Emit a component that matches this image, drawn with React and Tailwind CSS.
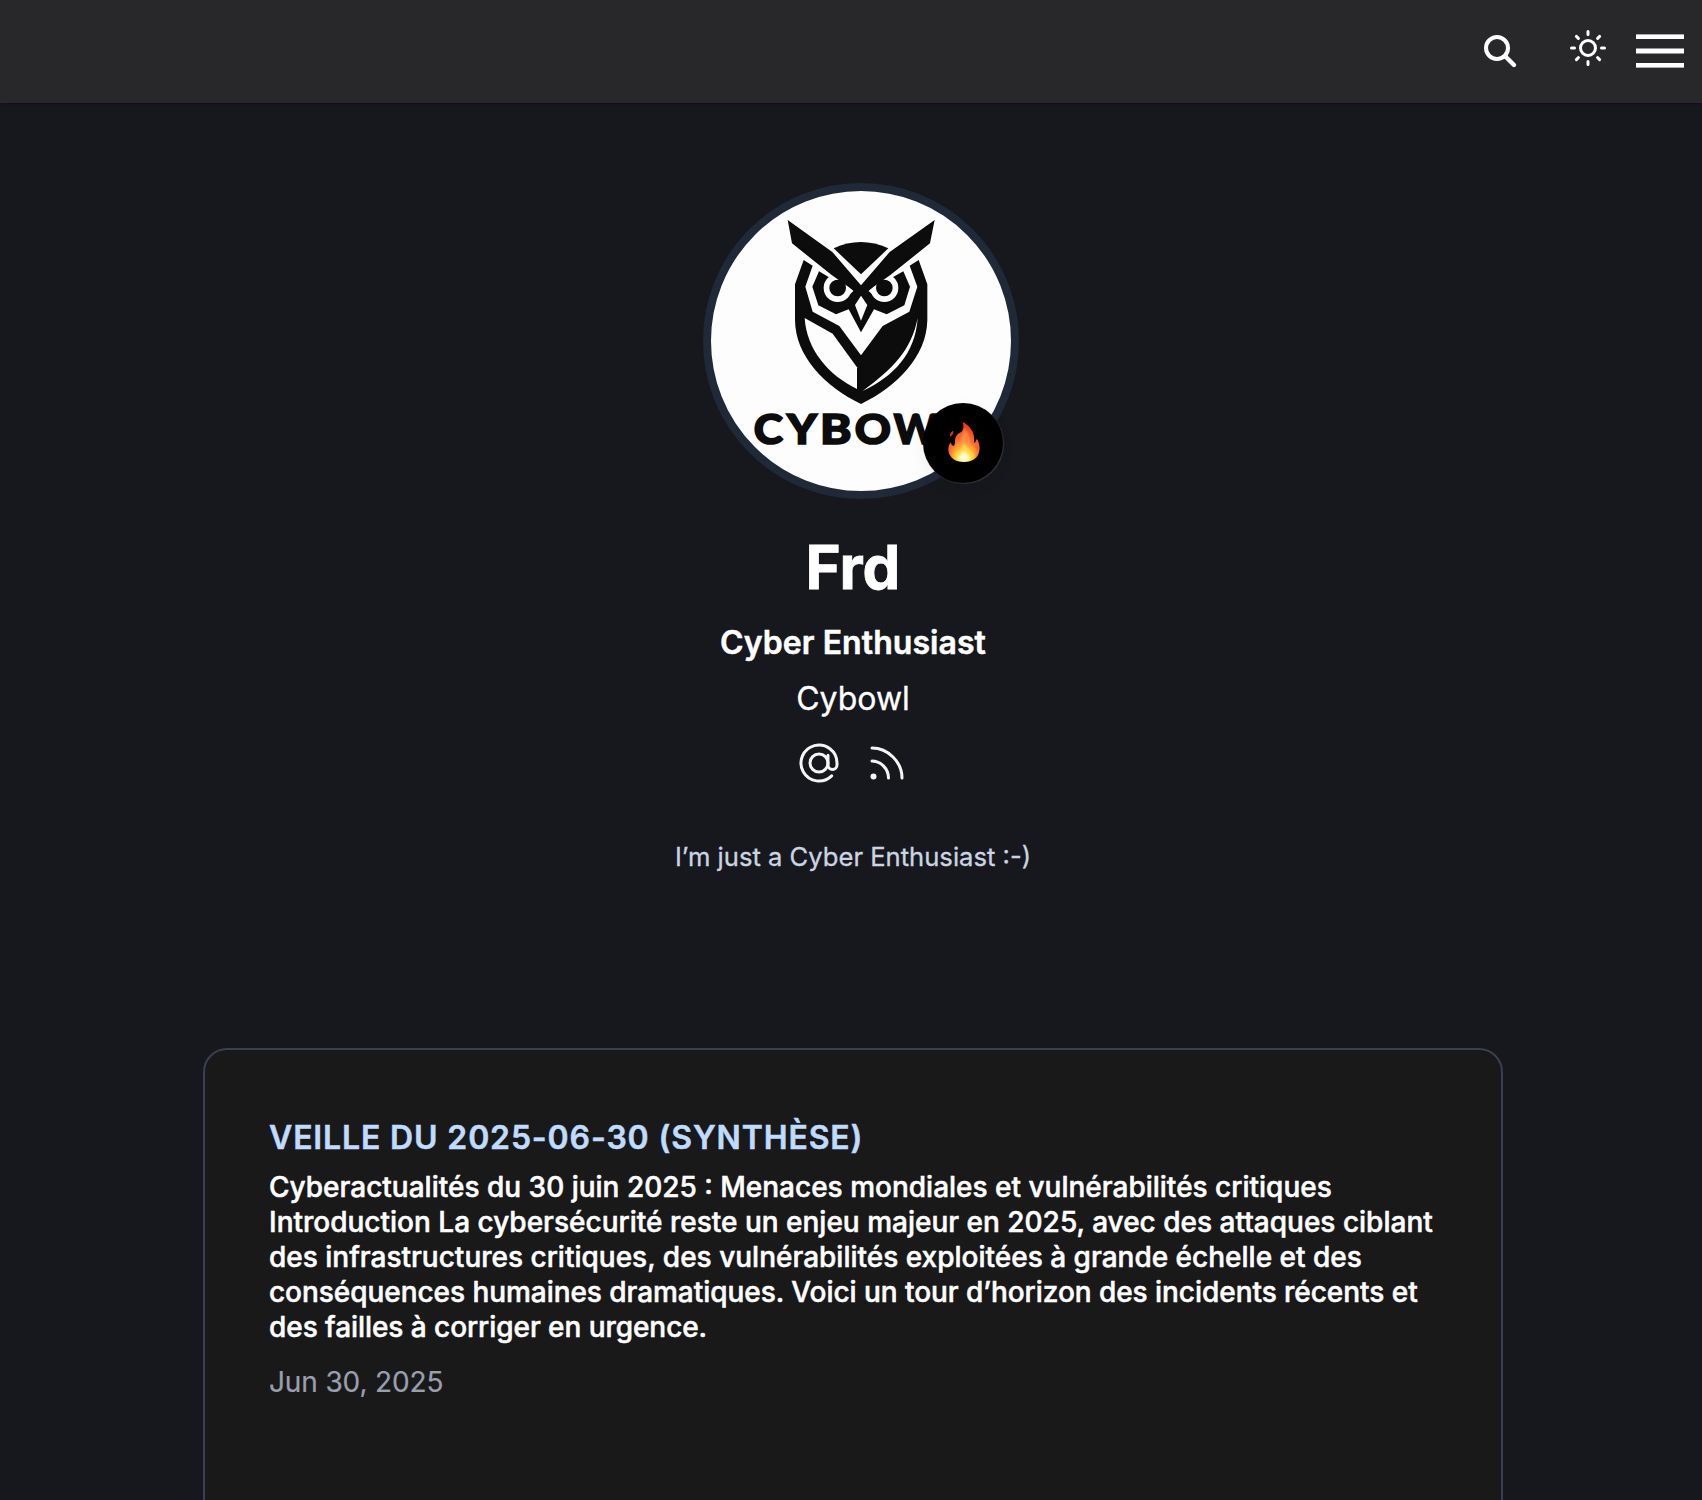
import React from "react";

function Header() {
  return (
    <header className="flex h-[103px] items-center justify-end bg-[#28282a] pr-[18px] shadow-[0_1px_3px_rgba(0,0,0,0.35)]">
      <button aria-label="Search" className="-mt-[2px] mr-[52px]">
        <svg width="36" height="36" viewBox="1482 33 36 36" fill="none" stroke="#fff" strokeWidth="4" strokeLinecap="round">
          <circle cx="1497" cy="48" r="11" />
          <path d="M1505.2 56.2 1514 65" strokeWidth="4.4" />
        </svg>
      </button>
      <button aria-label="Toggle theme" className="mr-[30px] -mt-[7px]">
        <svg width="36" height="36" viewBox="1570 30 36 36" fill="none" stroke="#fff" strokeWidth="3" strokeLinecap="round">
          <circle cx="1588" cy="48" r="7.5" />
          <path d="M1588 31.5v3M1588 61.5v3M1571.5 48h3M1601.5 48h3M1576.4 36.4l2 2M1597.6 57.6l2 2M1576.4 59.6l2-2M1597.6 38.4l2-2" />
        </svg>
      </button>
      <button aria-label="Menu" className="-mt-[2px]">
        <svg width="48" height="36" viewBox="1636 33 48 36" fill="#fff">
          <rect x="1636" y="34.4" width="48" height="4.6" />
          <rect x="1636" y="48.5" width="48" height="5" />
          <rect x="1636" y="63" width="48" height="4.6" />
        </svg>
      </button>
    </header>
  );
}

function OwlLogo() {
  return (
    <svg className="size-full" viewBox="63 63 900 900" fill="#0c0c0c">
      <path d="M431 235Q512 197 595 235L513 313Z" />
      <path d="M341 270 368 287 346 350 368 425 448 468 513 556 578 468 658 425 682 350 659 287 686 270 712 343V450C710 560 620 650 513 702 406 650 316 560 315 450V343Z" />
      <path d="M387 304 417 322 480 345 513 365 546 345 608 322 640 304 660 350 643 406 590 433 552 418 513 487 476 418 438 433 385 406 367 350Z" />
      <g fill="#fdfdfd">
        <path d="M344 444C350 540 416 616 501 657V592L428 491Z" />
        <path d="M683 444C676 552 610 620 518 663 610 595 664 540 683 444Z" />
        <path d="M513 377 532 405 513 452 495 405Z" />
        <circle cx="443" cy="354" r="42" />
        <circle cx="583" cy="354" r="42" />
        <path d="M470 340 491 362 478 374Z" />
        <path d="M556 340 535 362 548 374Z" />
      </g>
      <circle cx="443" cy="354" r="25" />
      <circle cx="583" cy="354" r="25" />
      <path
        stroke="#fdfdfd"
        strokeWidth="12"
        d="M340 248 418 306 434 330M686 248 608 306 592 330"
        fill="none"
      />
      <path d="M293 150 427 246 513 346 599 246 734 150 720 220 601 315 551 350 536 362 513 374 490 362 475 350 425 315 306 220Z" />
      <g fontFamily="Lato, sans-serif" fontWeight="900" fontSize="124" stroke="#0c0c0c" strokeWidth="5">
        <text transform="translate(191 822) scale(1.07 1)">C</text>
        <text transform="translate(291 822) scale(1.1 1)">Y</text>
        <text transform="translate(390 822) scale(1.15 1)">B</text>
        <text transform="translate(494 822) scale(1.08 1)">O</text>
        <text x="611" y="822">W</text>
      </g>
    </svg>
  );
}

function Flame() {
  return (
    <svg width="32" height="40" viewBox="0 0 96 120">
      <defs>
        <radialGradient id="fl" cx="0.5" cy="0.92" r="0.85">
          <stop offset="0" stopColor="#fffbd0" />
          <stop offset="0.2" stopColor="#ffec5c" />
          <stop offset="0.38" stopColor="#ffb52b" />
          <stop offset="0.56" stopColor="#ff7030" />
          <stop offset="1" stopColor="#f2371a" />
        </radialGradient>
        <filter id="soft">
          <feGaussianBlur stdDeviation="3" />
        </filter>
      </defs>
      <path fill="url(#fl)" d="M44 0C60 8 75 23 78 44 79 54 76 61 80 63 84 60 83 54 86 51 94 60 97 77 93 91 89 108 74 120 48 120 22 120 6 108 2 90-1 77 4 66 9 61 9 68 12 71 17 72 22 69 20 60 22 49 25 37 33 33 41 29 48 22 47 11 44 0Z" />
      <g filter="url(#soft)">
        <path fill="#ff9a4e" d="M48 18C60 32 66 46 66 62 66 76 71 80 79 76 77 92 68 106 48 110 30 106 23 94 27 80 29 60 45 50 48 18Z" opacity=".65" />
        <path fill="#ffe23f" d="M48 64C58 80 72 86 78 100 70 112 58 116 48 116 38 116 26 112 18 100 26 88 42 84 48 64Z" opacity=".8" />
        <path fill="#fffbd8" d="M48 88C56 96 62 100 65 107 60 114 54 116 48 116 42 116 36 114 31 107 34 100 42 96 48 88Z" />
      </g>
      <path fill="#e8351c" d="M16 27C16 34 14 38 9 43 6 44 5 40 7 36 9 31 12 28 16 27Z" />
    </svg>
  );
}

function Profile() {
  return (
    <section className="flex flex-col items-center pt-20 text-white">
      <div className="relative ml-4 size-[316px] rounded-full border-8 border-[#1f2937] bg-[#fdfdfd]">
        <div className="size-full overflow-hidden rounded-full">
          <OwlLogo />
        </div>
        <div className="absolute right-2 bottom-2 flex size-20 items-center justify-center rounded-full bg-black pb-0.5 pl-px shadow-[1px_1px_1px_#333,0_6px_16px_rgba(0,0,0,0.06)]">
          <Flame />
        </div>
      </div>
      <h1 className="mt-8 text-[60px] leading-[72px] font-bold [-webkit-text-stroke:0.8px_#fff]">Frd</h1>
      <h2 className="mt-5 text-[32px] leading-10 font-semibold tracking-[0.06px] [-webkit-text-stroke:0.5px_#fff]">Cyber Enthusiast</h2>
      <p className="mt-4 text-[32px] leading-10 [-webkit-text-stroke:0.3px_#fff]">Cybowl</p>
      <div className="mt-6 flex gap-7 text-[#f5f5f5]">
        <svg width="40" height="40" viewBox="0 0 24 24" fill="none" stroke="currentColor" strokeWidth="1.8" strokeLinecap="round" strokeLinejoin="round">
          <circle cx="12" cy="12" r="5.4" />
          <path d="M17.4 7.4v5.8a2.7 2.7 0 0 0 5.4 0V12a10.8 10.8 0 1 0-3.2 7.7" />
        </svg>
        <svg width="40" height="40" viewBox="0 0 40 40" fill="none" stroke="currentColor" strokeWidth="3" strokeLinecap="round">
          <path d="M5 5C21 5 35 19 35 35M5 18C14 18 21.500 26 21.500 35" />
          <circle cx="6.500" cy="33.500" r="3" fill="currentColor" stroke="none" />
        </svg>
      </div>
      <p className="mt-[58px] text-[25.6px] leading-8 text-[#cbd5e1] [-webkit-text-stroke:0.3px_#cbd5e1]">I’m just a Cyber Enthusiast :-)</p>
    </section>
  );
}

function PostCard() {
  return (
    <article className="mx-auto mt-[175px] h-[600px] w-[1300px] rounded-[24px] border-2 border-[#374151] bg-[#19191a] px-16 pt-[68px]">
      <h3 className="text-[32px] leading-10 font-semibold tracking-[0.85px] text-[#bfdbfe] [-webkit-text-stroke:0.5px_#bfdbfe]">
        VEILLE DU 2025-06-30 (SYNTHÈSE)
      </h3>
      <p className="mt-3 text-[28px] leading-[35px] font-medium whitespace-nowrap text-white [-webkit-text-stroke:0.5px_#fff]">
        Cyberactualités du 30 juin 2025 : Menaces mondiales et vulnérabilités critiques
        <br />
        Introduction La cybersécurité reste un enjeu majeur en 2025, avec des attaques ciblant
        <br />
        des infrastructures critiques, des vulnérabilités exploitées à grande échelle et des
        <br />
        <span className="tracking-[-0.05px]">
          conséquences humaines dramatiques. Voici un tour d’horizon des incidents récents et
        </span>
        <br />
        <span className="tracking-[-0.06px]">des failles à corriger en urgence.</span>
      </p>
      <time className="mt-[17px] block text-[28px] leading-10 tracking-[-0.13px] text-[#9a9fae] [-webkit-text-stroke:0.2px_#9a9fae]">
        Jun 30, 2025
      </time>
    </article>
  );
}

export default function App() {
  return (
    <div className="h-[1500px] overflow-hidden bg-[#17181d] font-['Inter',sans-serif]">
      <Header />
      <main className="pl-1">
        <Profile />
        <PostCard />
      </main>
    </div>
  );
}
